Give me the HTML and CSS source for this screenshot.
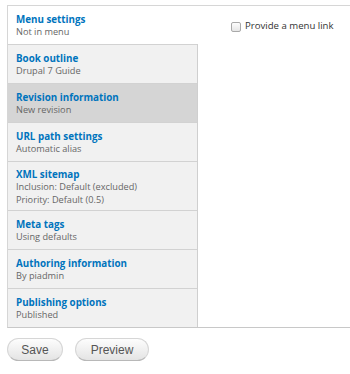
FILE: index.html
```html
<!DOCTYPE html>
<html>
<head>
<meta charset="utf-8">
<link rel="stylesheet" href="styles.css">
</head>
<body>
<div class="page">
  <div class="vtabs">
    <ul class="tab-list">
      <li class="tab selected"><a class="tab-title">Menu settings</a><span class="tab-summary">Not in menu</span></li>
      <li class="tab"><a class="tab-title">Book outline</a><span class="tab-summary">Drupal 7 Guide</span></li>
      <li class="tab hover"><a class="tab-title">Revision information</a><span class="tab-summary">New revision</span></li>
      <li class="tab"><a class="tab-title">URL path settings</a><span class="tab-summary">Automatic alias</span></li>
      <li class="tab tall"><a class="tab-title">XML sitemap</a><span class="tab-summary multi">Inclusion: Default (excluded)<br>Priority: Default (0.5)</span></li>
      <li class="tab"><a class="tab-title">Meta tags</a><span class="tab-summary">Using defaults</span></li>
      <li class="tab"><a class="tab-title">Authoring information</a><span class="tab-summary">By piadmin</span></li>
      <li class="tab"><a class="tab-title">Publishing options</a><span class="tab-summary">Published</span></li>
    </ul>
    <div class="pane">
      <label class="check-row"><input type="checkbox" class="check"><span>Provide a menu link</span></label>
    </div>
  </div>
  <div class="actions">
    <button class="btn btn-save">Save</button>
    <button class="btn btn-preview">Preview</button>
  </div>
</div>
</body>
</html>
```
FILE: styles.css
```css
html, body {
  margin: 0;
  padding: 0;
  background: #fff;
  overflow: hidden;
}
body {
  font-family: "Open Sans", "DejaVu Sans", sans-serif;
  color: #333;
}
.page {
  padding: 5px 0 0 7px;
}
.vtabs {
  display: flex;
  border: 1px solid #d6d6d6;
  border-right: none;
  border-bottom-color: #c8c8c8;
}
.tab-list {
  list-style: none;
  margin: 0;
  padding: 0;
  width: 189px;
  flex: none;
  background: #f1f1f1;
  border-right: 1px solid #cfcfcf;
}
.tab {
  display: flex;
  flex-direction: column;
  height: 38px;
  box-sizing: border-box;
  padding: 8px 8px 8px 8px;
  background: #f1f1f1;
  border-top: 1px solid #d2d2d2;
}
.tab:first-child {
  border-top: none;
}
.tab + .tab {
  height: 39px;
}
.tab.tall {
  height: 49px;
  padding-top: 7px;
}
.tab.selected {
  background: #fff;
  margin-right: -1px;
}
.tab.hover {
  background: #d5d5d5;
}
.tab-title {
  display: block;
  font-size: 9.8px;
  line-height: 12px;
  font-weight: bold;
  color: #0074bd;
  white-space: nowrap;
}
.tab-summary {
  display: block;
  margin-top: 1px;
  font-size: 9.2px;
  line-height: 9px;
  color: #666;
  white-space: nowrap;
}
.tab-summary.multi {
  margin-top: 0;
  line-height: 12.5px;
}
.pane {
  flex: 1;
  padding: 14px 0 0 33px;
}
.check-row {
  display: flex;
  align-items: center;
  gap: 4px;
  font-size: 9.6px;
  line-height: 12px;
  color: #333;
}
.check {
  appearance: none;
  -webkit-appearance: none;
  margin: 1px 0 0 0;
  width: 10px;
  height: 10px;
  border: 1px solid #a9a9a9;
  border-radius: 2px;
  background: linear-gradient(#fdfdfd, #e6e6e6);
  box-sizing: border-box;
}
.actions {
  display: flex;
  gap: 12px;
  margin-top: 10px;
}
.btn {
  height: 23px;
  padding: 0;
  border: 1px solid #d6d6d6;
  border-bottom-color: #b8b8b8;
  border-radius: 12px;
  background: linear-gradient(#fdfdfd, #e4e4e4);
  font-family: "Liberation Sans", Arial, sans-serif;
  font-size: 12px;
  color: #555;
  box-sizing: border-box;
}
.btn-save {
  width: 56px;
}
.btn-preview {
  width: 74px;
}
```
